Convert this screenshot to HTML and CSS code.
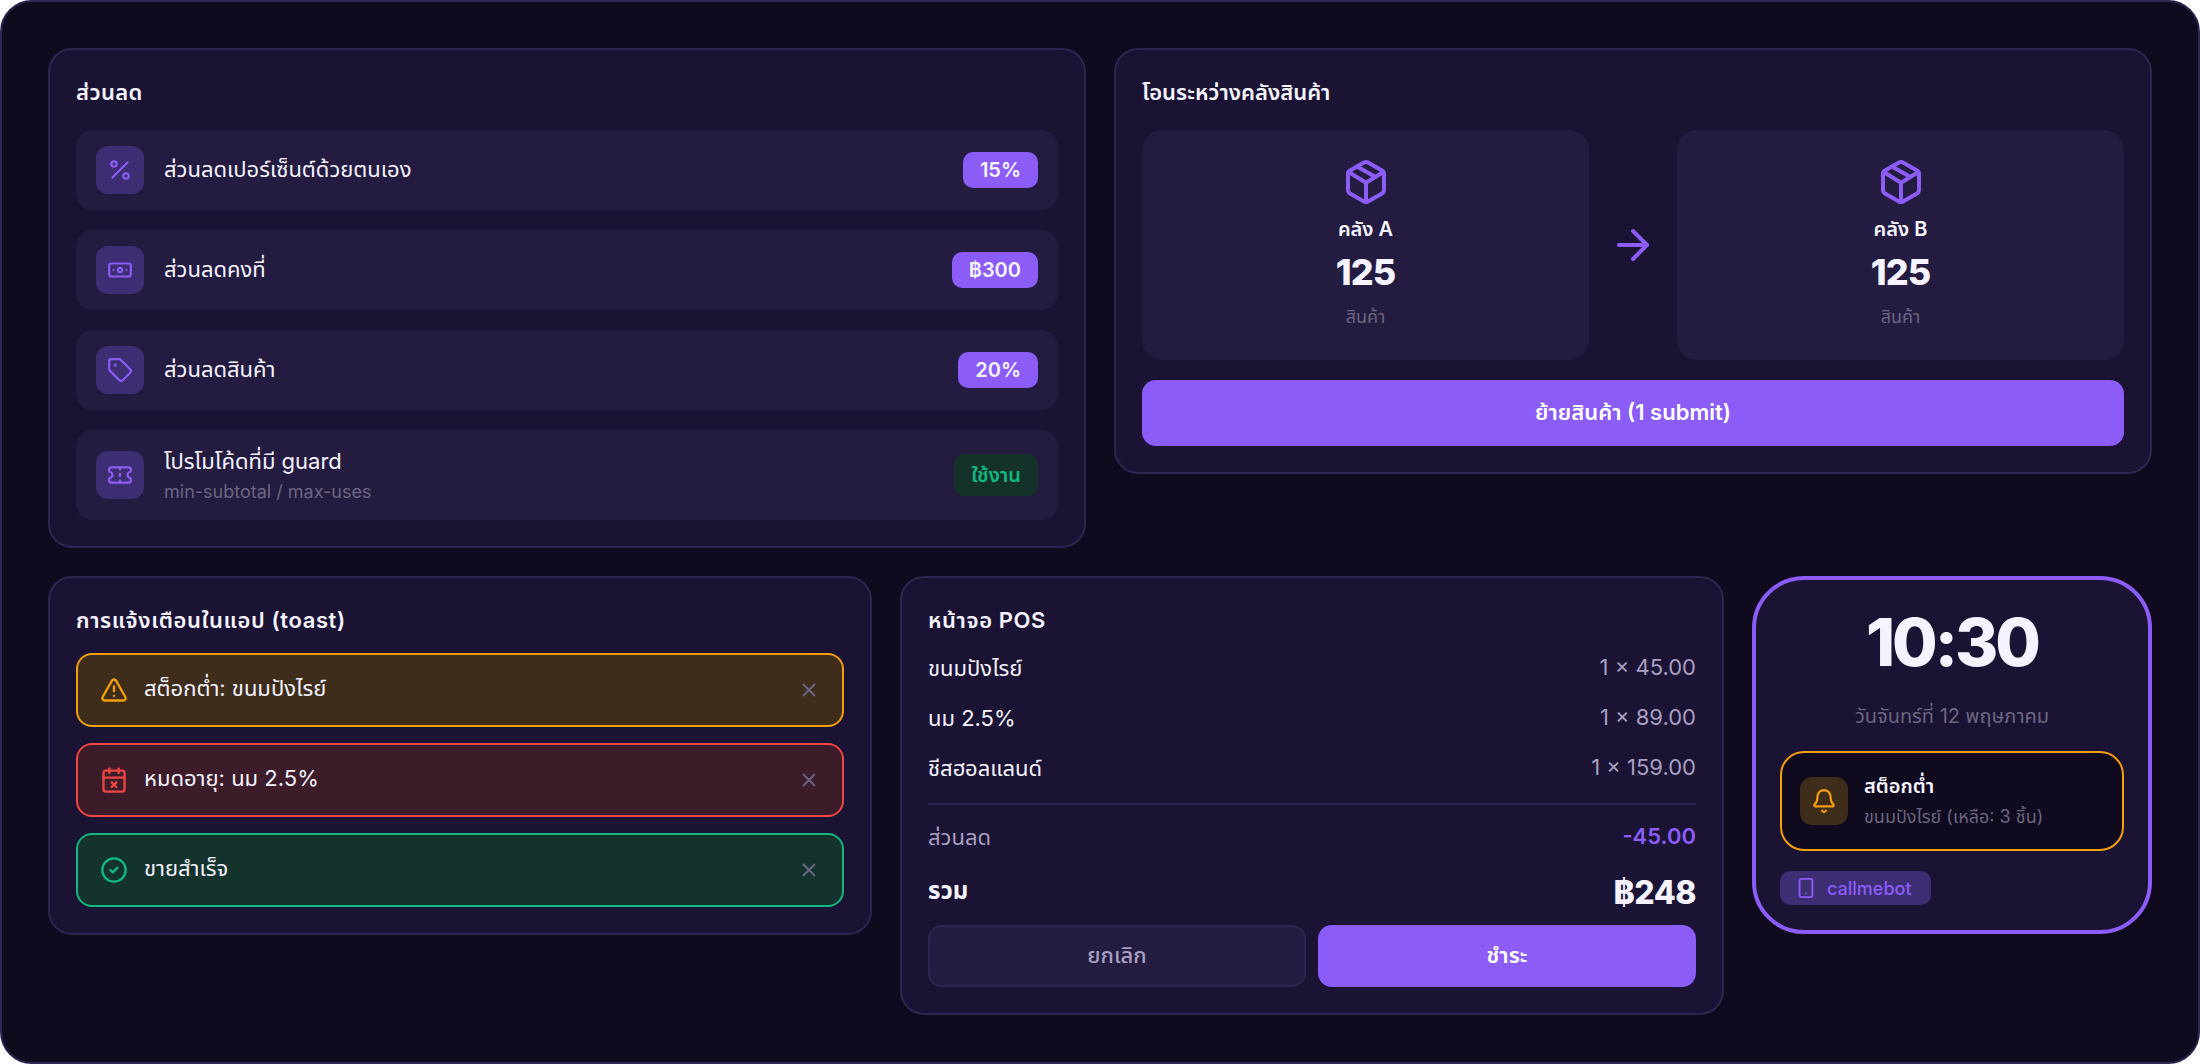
FILE: index.html
```html
<!DOCTYPE html>
<html lang="th">

<head>
    <meta charset="UTF-8">
    <title>POS Components</title>
    <link rel="stylesheet" href="styles.css">
</head>

<body>
    <main class="frame">
        <div class="top-row">
            <section class="card">
                <h3 class="card-title card-title-discount">ส่วนลด</h3>
                <div class="discount-list">
                    <div class="discount-row">
                        <span class="icon-box">
                            <svg class="icon" viewBox="0 0 24 24"><line x1="19" y1="5" x2="5" y2="19"/><circle cx="6.5" cy="6.5" r="2.5"/><circle cx="17.5" cy="17.5" r="2.5"/></svg>
                        </span>
                        <div class="discount-text"><div class="discount-name">ส่วนลดเปอร์เซ็นต์ด้วยตนเอง</div></div>
                        <span class="badge">15%</span>
                    </div>
                    <div class="discount-row">
                        <span class="icon-box">
                            <svg class="icon" viewBox="0 0 24 24"><rect x="2" y="6" width="20" height="12" rx="2"/><circle cx="12" cy="12" r="2"/><path d="M6 12h.01M18 12h.01"/></svg>
                        </span>
                        <div class="discount-text"><div class="discount-name">ส่วนลดคงที่</div></div>
                        <span class="badge">฿300</span>
                    </div>
                    <div class="discount-row">
                        <span class="icon-box">
                            <svg class="icon" viewBox="0 0 24 24"><path d="M12.586 2.586A2 2 0 0 0 11.172 2H4a2 2 0 0 0-2 2v7.172a2 2 0 0 0 .586 1.414l8.704 8.704a2.426 2.426 0 0 0 3.42 0l6.58-6.58a2.426 2.426 0 0 0 0-3.42z"/><circle cx="7.5" cy="7.5" r=".5" fill="currentColor"/></svg>
                        </span>
                        <div class="discount-text"><div class="discount-name">ส่วนลดสินค้า</div></div>
                        <span class="badge">20%</span>
                    </div>
                    <div class="discount-row discount-row-tall">
                        <span class="icon-box">
                            <svg class="icon" viewBox="0 0 24 24"><path d="M2 9a3 3 0 0 1 0 6v2a2 2 0 0 0 2 2h16a2 2 0 0 0 2-2v-2a3 3 0 0 1 0-6V7a2 2 0 0 0-2-2H4a2 2 0 0 0-2 2Z"/><path d="M12 5v2M12 17v2M12 11v2"/></svg>
                        </span>
                        <div class="discount-text">
                            <div class="discount-name">โปรโมโค้ดที่มี guard</div>
                            <div class="discount-sub">min-subtotal / max-uses</div>
                        </div>
                        <span class="badge badge-active">ใช้งาน</span>
                    </div>
                </div>
            </section>

            <section class="card">
                <h3 class="card-title">โอนระหว่างคลังสินค้า</h3>
                <div class="transfer">
                    <div class="store">
                        <svg class="icon store-icon" viewBox="0 0 24 24"><path d="M11 21.73a2 2 0 0 0 2 0l7-4A2 2 0 0 0 21 16V8a2 2 0 0 0-1-1.73l-7-4a2 2 0 0 0-2 0l-7 4A2 2 0 0 0 3 8v8a2 2 0 0 0 1 1.73z"/><path d="M12 22V12"/><path d="m3.3 7 7.703 4.734a2 2 0 0 0 1.994 0L20.7 7"/><path d="m7.5 4.27 9 5.15"/></svg>
                        <div class="store-name">คลัง A</div>
                        <div class="store-count">125</div>
                        <div class="store-unit">สินค้า</div>
                    </div>
                    <svg class="icon transfer-arrow" viewBox="0 0 24 24"><path d="M5 12h14"/><path d="m12 5 7 7-7 7"/></svg>
                    <div class="store">
                        <svg class="icon store-icon" viewBox="0 0 24 24"><path d="M11 21.73a2 2 0 0 0 2 0l7-4A2 2 0 0 0 21 16V8a2 2 0 0 0-1-1.73l-7-4a2 2 0 0 0-2 0l-7 4A2 2 0 0 0 3 8v8a2 2 0 0 0 1 1.73z"/><path d="M12 22V12"/><path d="m3.3 7 7.703 4.734a2 2 0 0 0 1.994 0L20.7 7"/><path d="m7.5 4.27 9 5.15"/></svg>
                        <div class="store-name">คลัง B</div>
                        <div class="store-count">125</div>
                        <div class="store-unit">สินค้า</div>
                    </div>
                </div>
                <button class="btn btn-primary btn-wide">ย้ายสินค้า (1 submit)</button>
            </section>
        </div>

        <div class="bottom-row">
            <section class="card">
                <h3 class="card-title card-title-toast">การแจ้งเตือนในแอป (toast)</h3>
                <div class="toast-list">
                    <div class="toast toast-warn">
                        <svg class="icon toast-icon" viewBox="0 0 24 24"><path d="m21.73 18-8-14a2 2 0 0 0-3.48 0l-8 14A2 2 0 0 0 4 21h16a2 2 0 0 0 1.73-3"/><path d="M12 9v4"/><path d="M12 17h.01"/></svg>
                        <span class="toast-text">สต็อกต่ำ: ขนมปังไรย์</span>
                        <svg class="icon toast-close" viewBox="0 0 24 24"><path d="M18 6 6 18"/><path d="m6 6 12 12"/></svg>
                    </div>
                    <div class="toast toast-danger">
                        <svg class="icon toast-icon" viewBox="0 0 24 24"><path d="M8 2v4"/><path d="M16 2v4"/><rect x="3" y="4" width="18" height="18" rx="2"/><path d="M3 10h18"/><path d="m14 14-4 4"/><path d="m10 14 4 4"/></svg>
                        <span class="toast-text">หมดอายุ: นม 2.5%</span>
                        <svg class="icon toast-close" viewBox="0 0 24 24"><path d="M18 6 6 18"/><path d="m6 6 12 12"/></svg>
                    </div>
                    <div class="toast toast-ok">
                        <svg class="icon toast-icon" viewBox="0 0 24 24"><circle cx="12" cy="12" r="10"/><path d="m9 12 2 2 4-4"/></svg>
                        <span class="toast-text">ขายสำเร็จ</span>
                        <svg class="icon toast-close" viewBox="0 0 24 24"><path d="M18 6 6 18"/><path d="m6 6 12 12"/></svg>
                    </div>
                </div>
            </section>

            <section class="card">
                <h3 class="card-title card-title-pos">หน้าจอ POS</h3>
                <div class="pos-line"><span class="pos-name">ขนมปังไรย์</span><span class="pos-qty">1 × 45.00</span></div>
                <div class="pos-line"><span class="pos-name">นม 2.5%</span><span class="pos-qty">1 × 89.00</span></div>
                <div class="pos-line"><span class="pos-name">ชีสฮอลแลนด์</span><span class="pos-qty">1 × 159.00</span></div>
                <hr class="pos-divider">
                <div class="pos-line pos-discount"><span class="pos-name">ส่วนลด</span><span class="pos-minus">-45.00</span></div>
                <div class="pos-total"><span>รวม</span><span class="pos-amount">฿248</span></div>
                <div class="pos-actions">
                    <button class="btn btn-ghost">ยกเลิก</button>
                    <button class="btn btn-primary">ชำระ</button>
                </div>
            </section>

            <section class="phone">
                <div class="phone-time">10:30</div>
                <div class="phone-date">วันจันทร์ที่ 12 พฤษภาคม</div>
                <div class="notice">
                    <span class="notice-icon">
                        <svg class="icon" viewBox="0 0 24 24"><path d="M10.268 21a2 2 0 0 0 3.464 0"/><path d="M3.262 15.326A1 1 0 0 0 4 17h16a1 1 0 0 0 .74-1.673C19.41 13.956 18 12.499 18 8A6 6 0 0 0 6 8c0 4.499-1.411 5.956-2.738 7.326"/></svg>
                    </span>
                    <div>
                        <div class="notice-title">สต็อกต่ำ</div>
                        <div class="notice-sub">ขนมปังไรย์ (เหลือ: 3 ชิ้น)</div>
                    </div>
                </div>
                <span class="chip">
                    <svg class="icon" viewBox="0 0 24 24"><rect x="5" y="2" width="14" height="20" rx="2"/><path d="M12 18h.01"/></svg>
                    callmebot
                </span>
            </section>
        </div>
    </main>
</body>

</html>
```

FILE: styles.css
```css
* {
    box-sizing: border-box;
}

body {
    margin: 0;
    background: #fff;
    font-family: Inter, "Noto Sans Thai", sans-serif;
    color: #f5f3ff;
}

.frame {
    width: 2200px;
    height: 1064px;
    padding: 46px;
    background: #0f0a1e;
    border: 2px solid #2d2650;
    border-radius: 32px;
}

.icon {
    width: 26px;
    height: 26px;
    fill: none;
    stroke: currentColor;
    stroke-width: 2;
    stroke-linecap: round;
    stroke-linejoin: round;
    flex-shrink: 0;
}

.top-row {
    display: grid;
    grid-template-columns: 1fr 1fr;
    gap: 28px;
    align-items: start;
    margin-bottom: 28px;
}

.bottom-row {
    display: grid;
    grid-template-columns: 1fr 1fr 400px;
    gap: 28px;
    align-items: start;
}

.card {
    background: #1a1333;
    border: 2px solid #2d2650;
    border-radius: 24px;
    padding: 26px;
}

.card-title {
    margin: 0 0 22px;
    font-size: 22px;
    line-height: 32px;
    font-weight: 600;
}

.card-title-discount {
    letter-spacing: 0.4px;
}

.card-title-toast {
    margin-bottom: 17px;
    letter-spacing: 0.6px;
}

.card-title-pos {
    margin-bottom: 7px;
    letter-spacing: 0.6px;
}

.discount-list {
    display: flex;
    flex-direction: column;
    gap: 20px;
}

.discount-row {
    display: flex;
    align-items: center;
    gap: 20px;
    height: 80px;
    padding: 0 20px;
    background: #231c40;
    border-radius: 16px;
}

.discount-row-tall {
    height: 90px;
}

.icon-box {
    display: flex;
    align-items: center;
    justify-content: center;
    width: 48px;
    height: 48px;
    background: #3d2d73;
    color: #8b5cf6;
    border-radius: 12px;
    flex-shrink: 0;
}

.discount-text {
    flex: 1;
}

.discount-name {
    padding-bottom: 2px;
    font-size: 22px;
    line-height: 32px;
}

.discount-row-tall .discount-name {
    padding-bottom: 0;
    margin-top: 1px;
}

.discount-sub {
    margin-top: 1px;
    font-size: 18px;
    line-height: 28px;
    color: #6b6580;
}

.badge {
    padding: 0 17px;
    height: 36px;
    line-height: 36px;
    font-size: 20px;
    font-weight: 600;
    background: #8b5cf6;
    border-radius: 10px;
}

.badge-active {
    height: 42px;
    line-height: 42px;
    background: #143229;
    color: #10b981;
}

.transfer {
    display: grid;
    grid-template-columns: 1fr 48px 1fr;
    gap: 20px;
    align-items: center;
    margin-bottom: 20px;
}

.store {
    display: flex;
    flex-direction: column;
    align-items: center;
    height: 230px;
    padding-top: 28px;
    background: #231c40;
    border-radius: 20px;
}

.store-icon {
    width: 48px;
    height: 48px;
    color: #8b5cf6;
}

.store-name {
    margin-top: 7px;
    font-size: 20px;
    line-height: 32px;
    font-weight: 600;
}

.store-count {
    margin-top: 2px;
    font-size: 36px;
    line-height: 50px;
    font-weight: 800;
    letter-spacing: -1px;
}

.store-unit {
    margin-top: 6px;
    font-size: 18px;
    line-height: 28px;
    color: #6b6580;
}

.transfer-arrow {
    width: 48px;
    height: 48px;
    color: #8b5cf6;
}

.btn {
    height: 62px;
    font-family: inherit;
    font-size: 22px;
    font-weight: 600;
    border: none;
    border-radius: 14px;
}

.btn-primary {
    background: #8b5cf6;
    color: #fff;
}

.btn-ghost {
    background: #231c40;
    border: 2px solid #2d2650;
    color: #a79fc0;
    font-weight: 500;
}

.btn-wide {
    display: block;
    width: 100%;
    height: 66px;
}

.toast-list {
    display: flex;
    flex-direction: column;
    gap: 16px;
}

.toast {
    display: flex;
    align-items: center;
    gap: 16px;
    height: 74px;
    padding: 0 22px;
    border: 2px solid;
    border-radius: 16px;
}

.toast-warn {
    background: #3d2d1a;
    border-color: #f59e0b;
    color: #f59e0b;
}

.toast-danger {
    background: #3d1c2a;
    border-color: #ef4444;
    color: #ef4444;
}

.toast-ok {
    background: #14332c;
    border-color: #10b981;
    color: #10b981;
}

.toast-icon {
    width: 28px;
    height: 28px;
}

.toast-text {
    flex: 1;
    padding-bottom: 2px;
    font-size: 22px;
    color: #f5f3ff;
}

.toast-close {
    width: 22px;
    height: 22px;
    color: #6b6580;
}

.pos-line {
    display: flex;
    justify-content: space-between;
    align-items: center;
    height: 50px;
    font-size: 22px;
}

.pos-name {
    margin-top: 2px;
}

.pos-qty {
    margin-bottom: 3px;
    color: #a79fc0;
}

.pos-divider {
    margin: 10px 0 7px;
    border: none;
    border-top: 2px solid #2d2650;
}

.pos-discount {
    color: #a79fc0;
}

.pos-minus {
    margin-bottom: 3px;
    color: #8b5cf6;
    font-weight: 600;
}

.pos-total {
    display: flex;
    justify-content: space-between;
    align-items: center;
    height: 52px;
    margin-top: 4px;
    margin-bottom: 7px;
    font-size: 24px;
    font-weight: 700;
}

.pos-amount {
    font-size: 32px;
    font-weight: 800;
    letter-spacing: -0.5px;
}

.pos-actions {
    display: grid;
    grid-template-columns: 1fr 1fr;
    gap: 12px;
}

.phone {
    display: flex;
    flex-direction: column;
    align-items: flex-start;
    padding: 24px 24px 25px;
    background: #1a1333;
    border: 4px solid #8b5cf6;
    border-radius: 52px;
}

.phone-time {
    align-self: stretch;
    text-align: center;
    font-size: 66px;
    line-height: 76px;
    font-weight: 800;
    letter-spacing: -3px;
}

.phone-date {
    align-self: stretch;
    margin-top: 22px;
    text-align: center;
    font-size: 20px;
    line-height: 28px;
    color: #6b6580;
}

.notice {
    display: flex;
    align-items: center;
    gap: 16px;
    align-self: stretch;
    height: 100px;
    margin-top: 21px;
    padding: 0 18px;
    background: #0f0a1e;
    border: 2px solid #f59e0b;
    border-radius: 24px;
}

.notice-icon {
    display: flex;
    align-items: center;
    justify-content: center;
    width: 48px;
    height: 48px;
    background: #3d2d1a;
    color: #f59e0b;
    border-radius: 12px;
}

.notice-title {
    font-size: 20px;
    line-height: 30px;
    font-weight: 600;
}

.notice-sub {
    margin-top: 1px;
    font-size: 18px;
    line-height: 30px;
    color: #6b6580;
}

.chip {
    display: flex;
    align-items: center;
    gap: 10px;
    height: 34px;
    margin-top: 20px;
    padding: 0 19px 0 15px;
    background: #3d2d73;
    color: #8b5cf6;
    border-radius: 10px;
    font-size: 18px;
    font-weight: 500;
}

.chip .icon {
    width: 22px;
    height: 22px;
}
```
